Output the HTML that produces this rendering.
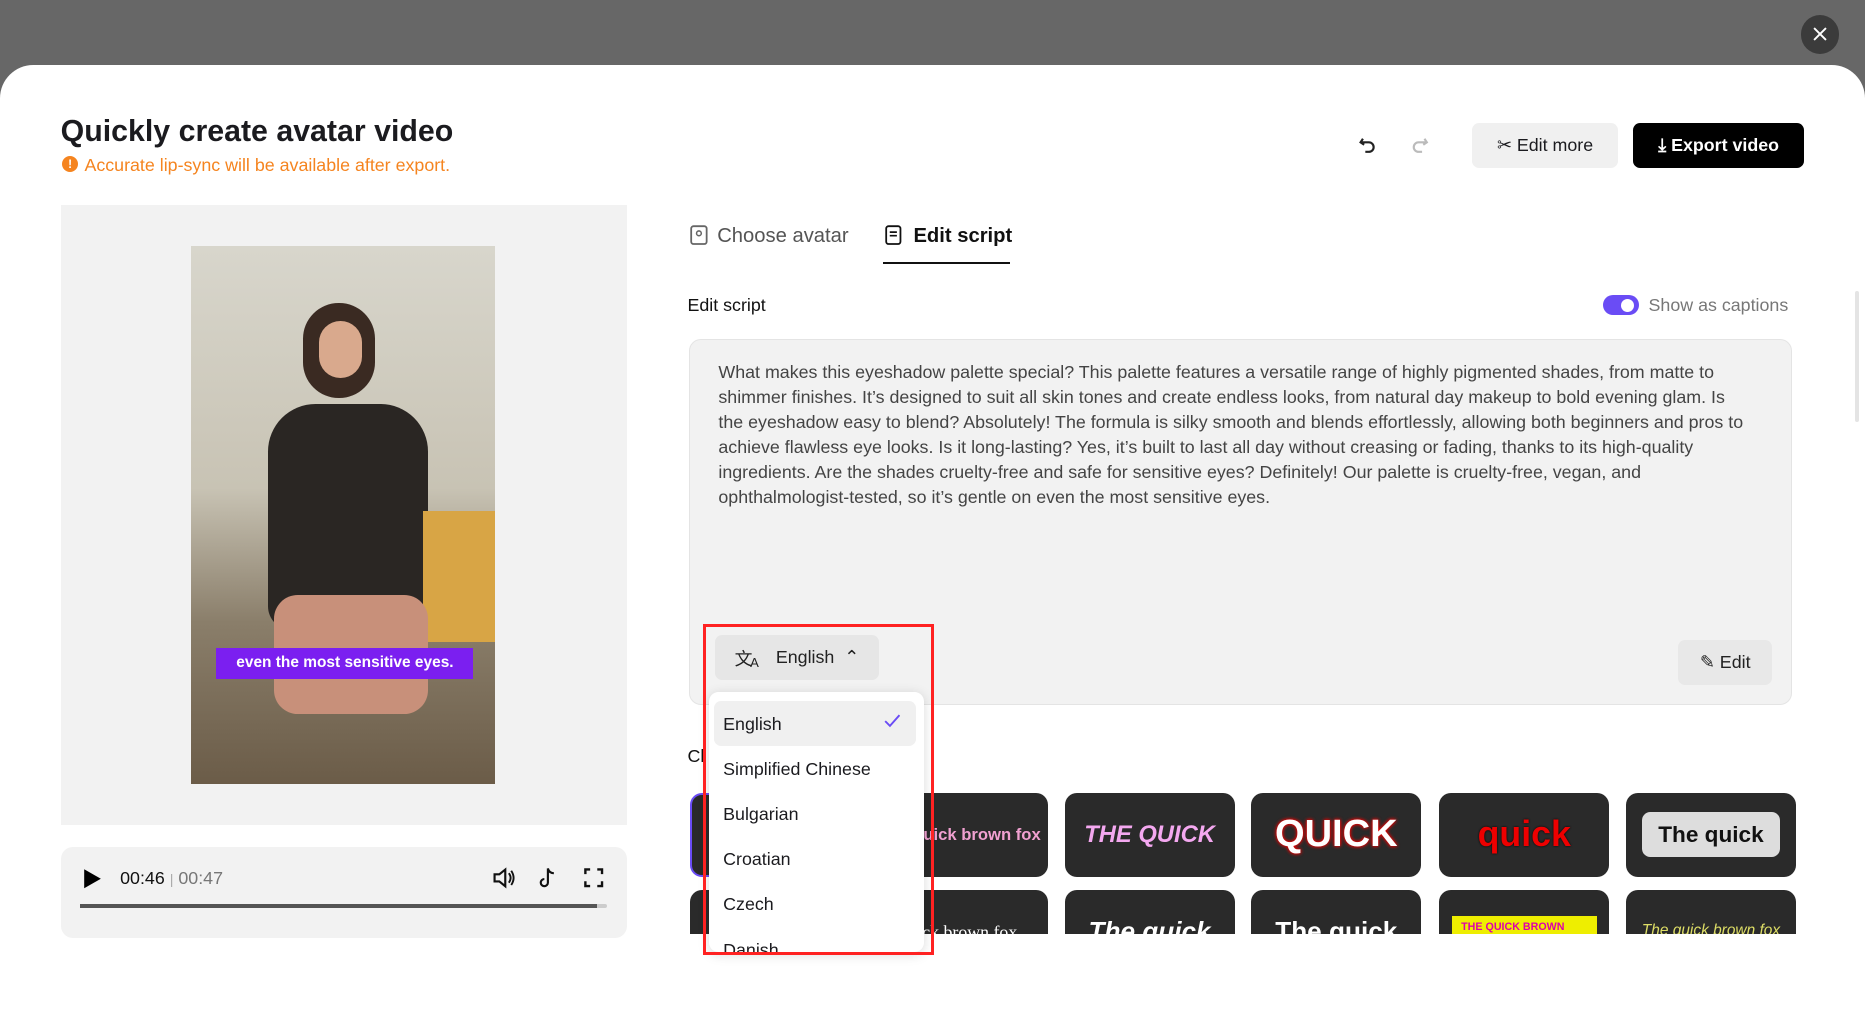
<!DOCTYPE html>
<html><head><meta charset="utf-8">
<style>
html{zoom:1.18941}
*{box-sizing:border-box;margin:0;padding:0}
body{width:1568px;height:815px;overflow:hidden;background:#676767;font-family:"Liberation Sans",sans-serif;position:relative}
.a{position:absolute}
.modal{left:0;top:55px;width:1568px;height:800px;background:#fff;border-radius:28px 28px 0 0}
.close{left:1514px;top:13px;width:32px;height:32px;border-radius:50%;background:#3b3b3b}
.btn{border-radius:6px;font-size:15px;display:flex;align-items:center;justify-content:center;gap:6px;font-weight:bold}
.card{width:143px;height:70px;background:#2a2a2a;border-radius:10px;overflow:hidden;display:flex;align-items:center;justify-content:center;color:#fff;font-weight:bold}
.r2{align-items:flex-start;padding-top:22px}
.it{left:608px;font-size:15px;color:#1b1b1f}
</style></head><body>
<div class="a close"><svg width="32" height="32"><path d="M11 11L21 21M21 11L11 21" stroke="#fff" stroke-width="1.6"/></svg></div>
<div class="a modal"></div>
<div class="a" style="left:51px;top:97px;font-size:25.5px;font-weight:bold;color:#1b1b1f">Quickly create avatar video</div>
<div class="a" style="left:52px;top:131px;width:14px;height:14px;border-radius:50%;background:#f5841f;color:#fff;font-size:10px;font-weight:bold;text-align:center;line-height:14px">!</div>
<div class="a" style="left:71px;top:130px;font-size:15px;color:#f5841f">Accurate lip-sync will be available after export.</div>
<svg class="a" style="left:1141px;top:113px" width="18" height="18"><path d="M5 4L3 7L6 9M3 7H10A4 4 0 0 1 10 15H7" fill="none" stroke="#222" stroke-width="1.8"/></svg>
<svg class="a" style="left:1185px;top:113px" width="18" height="18"><path d="M13 4L15 7L12 9M15 7H8A4 4 0 0 0 8 15H11" fill="none" stroke="#bbb" stroke-width="1.8"/></svg>
<div class="a btn" style="left:1238px;top:103px;width:122px;height:38px;background:#f0f0f0;color:#1b1b1f;font-weight:normal">✂ Edit more</div>
<div class="a btn" style="left:1373px;top:103px;width:144px;height:38px;background:#000;color:#fff">⤓ Export video</div>
<!-- left -->
<div class="a" style="left:51px;top:172px;width:476px;height:522px;background:#f2f2f2"></div>
<div class="a" style="left:161px;top:207px;width:255px;height:452px;background:linear-gradient(180deg,#d8d6cc 0%,#c8c3b4 45%,#8a7e6a 70%,#6b5c48 100%)"></div>
<div class="a" style="left:255px;top:255px;width:60px;height:80px;border-radius:30px;background:#3a2a22"></div>
<div class="a" style="left:268px;top:270px;width:36px;height:48px;border-radius:18px;background:#d9a98d"></div>
<div class="a" style="left:225px;top:340px;width:135px;height:190px;border-radius:40px 40px 20px 20px;background:#2a2623"></div>
<div class="a" style="left:356px;top:430px;width:60px;height:110px;background:#d8a545"></div>
<div class="a" style="left:230px;top:500px;width:130px;height:100px;border-radius:20px;background:#c8907a"></div>
<div class="a" style="left:182px;top:545px;width:216px;height:26px;background:#7b1ff0;color:#fff;font-size:13px;font-weight:bold;text-align:center;line-height:26px">even the most sensitive eyes.</div>
<div class="a" style="left:51px;top:712px;width:476px;height:77px;background:#f2f2f2;border-radius:10px"></div>
<svg class="a" style="left:70px;top:730px" width="16" height="18"><path d="M1 1L15 9L1 17Z" fill="#000"/></svg>
<div class="a" style="left:101px;top:730px;font-size:15px;color:#111">00:46 <span style="color:#aaa;font-size:12px">|</span> <span style="color:#777">00:47</span></div>
<svg class="a" style="left:413px;top:728px" width="22" height="20"><path d="M3 7H7L12 3V17L7 13H3Z" fill="none" stroke="#111" stroke-width="1.8"/><path d="M15 6Q18 10 15 14M17 4Q21 10 17 16" fill="none" stroke="#111" stroke-width="1.6"/></svg>
<svg class="a" style="left:451px;top:728px" width="20" height="20"><path d="M10 2V14A3 3 0 1 1 7 11M10 2Q11 6 15 6" fill="none" stroke="#111" stroke-width="1.8"/></svg>
<svg class="a" style="left:490px;top:729px" width="18" height="18"><path d="M2 6V2H6M12 2H16V6M16 12V16H12M6 16H2V12" fill="none" stroke="#111" stroke-width="2"/></svg>
<div class="a" style="left:67px;top:760px;width:443px;height:3px;background:#ccc;border-radius:2px"><div style="width:435px;height:3px;background:#555"></div></div>
<!-- tabs -->
<svg class="a" style="left:580px;top:189px" width="17" height="18"><rect x="1" y="1" width="13" height="15" rx="2" fill="none" stroke="#666" stroke-width="1.5"/><circle cx="7.5" cy="7" r="2" fill="none" stroke="#666" stroke-width="1.3"/></svg>
<div class="a" style="left:603px;top:189px;font-size:17px;color:#555">Choose avatar</div>
<svg class="a" style="left:744px;top:189px" width="18" height="18"><rect x="1" y="1" width="12" height="15" rx="2" fill="none" stroke="#111" stroke-width="1.5"/><path d="M4 6H10M4 9H10" stroke="#111" stroke-width="1.4"/></svg>
<div class="a" style="left:768px;top:189px;font-size:17px;font-weight:bold;color:#111">Edit script</div>
<div class="a" style="left:742px;top:220px;width:107px;height:2px;background:#111"></div>
<div class="a" style="left:578px;top:248px;font-size:15px;color:#111">Edit script</div>
<div class="a" style="left:1348px;top:248px;width:30px;height:17px;border-radius:9px;background:#6a4cf5"><div style="position:absolute;left:15px;top:3px;width:11px;height:11px;border-radius:50%;background:#fff"></div></div>
<div class="a" style="left:1386px;top:248px;font-size:15px;color:#777">Show as captions</div>
<div class="a" style="left:579px;top:285px;width:928px;height:308px;background:#f2f2f2;border:1px solid #e4e4e4;border-radius:10px"></div>
<div class="a" style="left:604px;top:303px;width:862px;font-size:15px;line-height:21px;color:#444">What makes this eyeshadow palette special? This palette features a versatile range of highly pigmented shades, from matte to shimmer finishes. It’s designed to suit all skin tones and create endless looks, from natural day makeup to bold evening glam. Is the eyeshadow easy to blend? Absolutely! The formula is silky smooth and blends effortlessly, allowing both beginners and pros to achieve flawless eye looks. Is it long-lasting? Yes, it’s built to last all day without creasing or fading, thanks to its high-quality ingredients. Are the shades cruelty-free and safe for sensitive eyes? Definitely! Our palette is cruelty-free, vegan, and ophthalmologist-tested, so it’s gentle on even the most sensitive eyes.</div>
<div class="a btn" style="left:601px;top:534px;width:138px;height:38px;background:#e6e6e6;color:#222;font-weight:normal">文<span style="font-size:11px;margin-left:-8px;margin-top:8px">A</span>&nbsp; English &nbsp;⌃</div>
<div class="a btn" style="left:1411px;top:538px;width:79px;height:38px;background:#e8e8e8;color:#222;font-weight:normal">✎ Edit</div>
<div class="a" style="left:578px;top:627px;font-size:15px;color:#111">Cl</div>
<!-- cards -->
<div class="a card" style="left:580px;top:667px;border:2px solid #6a4cf5"></div>
<div class="a card" style="left:738px;top:667px;justify-content:flex-end;padding-right:6px;color:#f0a0d0;font-size:14px">uick brown fox</div>
<div class="a card" style="left:895px;top:667px;color:#f4a8f0;font-style:italic;font-size:20px">THE QUICK</div>
<div class="a card" style="left:1052px;top:667px;font-size:32px;text-shadow:0 0 3px #e00,0 0 3px #e00">QUICK</div>
<div class="a card" style="left:1210px;top:667px;color:#e00;font-size:30px;text-shadow:0 0 2px #000">quick</div>
<div class="a card" style="left:1367px;top:667px"><div style="background:#ddd;color:#111;border-radius:7px;padding:8px 14px;font-size:19px">The quick</div></div>
<div class="a" style="left:580px;top:748px;width:930px;height:37px;overflow:hidden">
<div class="a card" style="left:0;top:0"></div>
<div class="a card r2" style="left:158px;top:0;font-family:'Liberation Serif';font-weight:normal;font-size:15px;padding-top:27px">uick brown fox</div>
<div class="a card r2" style="left:315px;top:0;font-size:22px;font-style:italic">The quick</div>
<div class="a card r2" style="left:472px;top:0;font-size:22px">The quick</div>
<div class="a card r2" style="left:630px;top:0"><div style="background:#ee0;color:#d0a;font-size:9px;padding:4px 8px;width:122px">THE QUICK BROWN FOX</div></div>
<div class="a card r2" style="left:787px;top:0;color:#dd6;font-style:italic;font-weight:normal;font-size:13px;padding-top:27px">The quick brown fox</div>
</div>
<!-- dropdown -->
<div class="a" style="left:596px;top:582px;width:181px;height:218px;background:#fff;border-radius:8px;box-shadow:0 2px 10px rgba(0,0,0,.15);overflow:hidden">
<div class="a" style="left:4px;top:7px;width:170px;height:38px;background:#f0f0f0;border-radius:6px"></div>
<svg class="a" style="left:147px;top:18px" width="14" height="12"><path d="M1 6L5 10L13 1" fill="none" stroke="#6a4cf5" stroke-width="1.6"/></svg>
</div>
<div class="a it" style="top:600px">English</div>
<div class="a it" style="top:638px">Simplified Chinese</div>
<div class="a it" style="top:676px">Bulgarian</div>
<div class="a it" style="top:714px">Croatian</div>
<div class="a it" style="top:752px">Czech</div>
<div class="a" style="left:596px;top:785px;width:181px;height:15px;overflow:hidden"><div class="a" style="left:12px;top:5px;font-size:15px;color:#1b1b1f">Danish</div></div>
<div class="a" style="left:591px;top:525px;width:194px;height:278px;border:3px solid #f22"></div>
<div class="a" style="left:1560px;top:245px;width:3px;height:110px;background:#e4e4e4;border-radius:2px"></div>
</body></html>
